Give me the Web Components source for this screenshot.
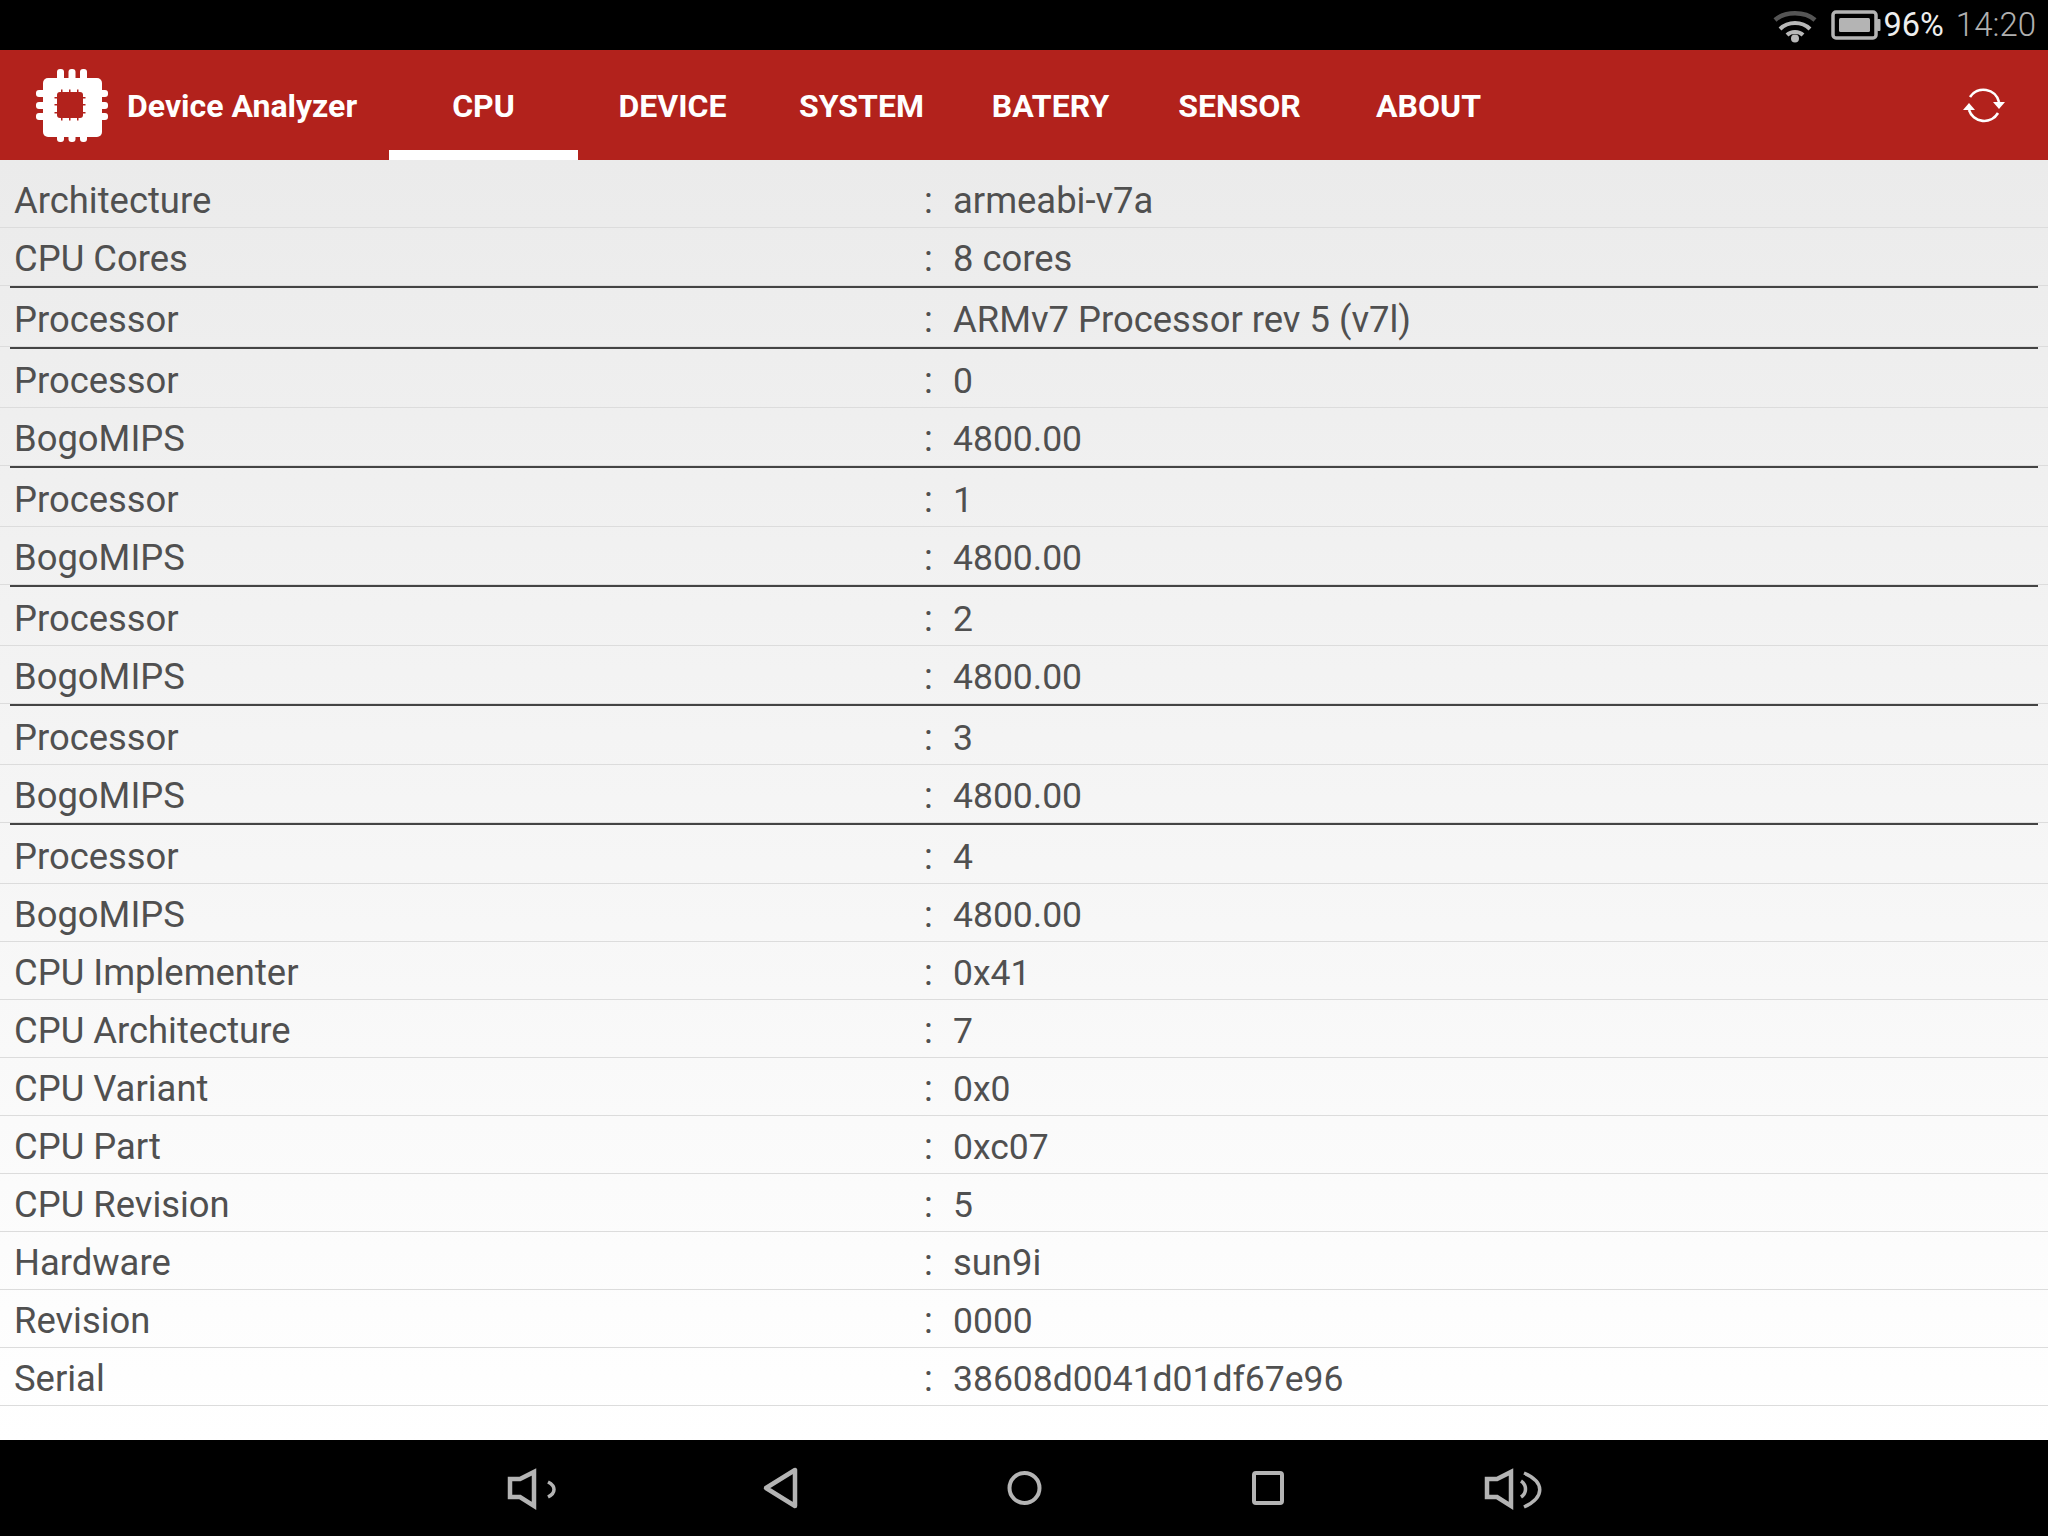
<!DOCTYPE html>
<html><head><meta charset="utf-8"><style>
html,body{margin:0;padding:0;background:#fff}
body{width:2048px;height:1536px;overflow:hidden;font-family:Roboto,"Liberation Sans",sans-serif}
</style></head><body>
<da-app>
<da-status></da-status>
<da-header></da-header>
<da-list>
<da-row k="Architecture" v="armeabi-v7a"></da-row>
<da-row k="CPU Cores" v="8 cores" end></da-row>
<da-row k="Processor" v="ARMv7 Processor rev 5 (v7l)" end></da-row>
<da-row k="Processor" v="0" n></da-row><da-row k="BogoMIPS" v="4800.00" end n></da-row>
<da-row k="Processor" v="1" n></da-row><da-row k="BogoMIPS" v="4800.00" end n></da-row>
<da-row k="Processor" v="2" n></da-row><da-row k="BogoMIPS" v="4800.00" end n></da-row>
<da-row k="Processor" v="3" n></da-row><da-row k="BogoMIPS" v="4800.00" end n></da-row>
<da-row k="Processor" v="4" n></da-row><da-row k="BogoMIPS" v="4800.00" n></da-row>
<da-row k="CPU Implementer" v="0x41" n></da-row>
<da-row k="CPU Architecture" v="7" n></da-row>
<da-row k="CPU Variant" v="0x0" n></da-row>
<da-row k="CPU Part" v="0xc07" n></da-row>
<da-row k="CPU Revision" v="5" n></da-row>
<da-row k="Hardware" v="sun9i"></da-row>
<da-row k="Revision" v="0000" n></da-row>
<da-row k="Serial" v="38608d0041d01df67e96" n></da-row>
</da-list>
<da-nav></da-nav>
</da-app>
<script>
function def(name,css,html){
  customElements.define(name,class extends HTMLElement{
    connectedCallback(){
      if(this.shadowRoot)return;
      const r=this.attachShadow({mode:'open'});
      r.innerHTML='<style>'+css+'</style>'+(typeof html==='function'?html(this):html);
    }
  });
}
def('da-app',`:host{display:flex;flex-direction:column;width:2048px;height:1536px}`,`<slot></slot>`);
def('da-status',`:host{display:flex;height:50px;flex:none;background:#000;align-items:center;justify-content:flex-end;padding-right:12px;box-sizing:border-box;font-family:Roboto,sans-serif;font-size:33px;font-weight:300;line-height:50px}
.p{color:#eee;margin-left:3px;font-weight:400;font-size:32.5px}.t{color:#b0b0b0;margin-left:12px}
svg{display:block;flex:none}`,
`<svg width="44" height="34" viewBox="0 0 44 34" style="margin:4px 14px 0 0"><path d="M2 10C12 1 32 1 42 10" fill="none" stroke="#555" stroke-width="4.5"/><path d="M7 19C15 11 29 11 37 19" fill="none" stroke="#b8b8b8" stroke-width="4"/><path d="M14 25C18 21 26 21 30 25" fill="none" stroke="#b8b8b8" stroke-width="4"/><circle cx="22" cy="28.5" r="4" fill="#b8b8b8"/></svg>
<svg width="50" height="30" viewBox="0 0 50 30"><rect x="2" y="2" width="43" height="26" rx="3" fill="none" stroke="#b4b4b4" stroke-width="3.5"/><rect x="8" y="8" width="31" height="14" rx="1.5" fill="#b4b4b4"/><rect x="46" y="9" width="3.5" height="12" rx="1" fill="#b4b4b4"/></svg>
<span class="p">96%</span><span class="t">14:20</span>`);
def('da-header',`:host{display:flex;height:110px;flex:none;background:#b2221c;color:#fff;box-sizing:border-box;align-items:stretch}
.logo{display:block;margin:19px 0 0 36px;width:72px;height:73px;flex:none}
.title{font-size:32px;font-weight:700;margin-left:19px;line-height:112px;width:262px;flex:none}
.tabs{display:flex;font-size:32px;font-weight:700}
.tab{display:block;width:189px;line-height:112px;text-align:center;box-sizing:border-box}
.on{box-shadow:inset 0 -10px 0 #fff}
.sync{display:block;align-self:center;margin-left:auto;margin-right:40px;flex:none}`,
`<svg class="logo" viewBox="0 0 72 73"><g fill="#fff"><rect x="7" y="9" width="59" height="59" rx="5"/><rect x="21" y="0" width="7" height="73" rx="3"/><rect x="32.500" y="0" width="7" height="73" rx="3"/><rect x="44" y="0" width="7" height="73" rx="3"/><rect x="0" y="21" width="72" height="7" rx="3"/><rect x="0" y="33" width="72" height="7" rx="3"/><rect x="0" y="44" width="72" height="7" rx="3"/></g><rect x="21" y="23" width="26" height="26" rx="3" fill="#b2221c"/><g fill="#b2221c"><rect x="25" y="20.500" width="1.500" height="31"/><rect x="33" y="20.500" width="1.500" height="31"/><rect x="41" y="20.500" width="1.500" height="31"/><rect x="18.500" y="28" width="31" height="1.500"/><rect x="18.500" y="35" width="31" height="1.500"/><rect x="18.500" y="43" width="31" height="1.500"/></g></svg>
<span class="title">Device Analyzer</span>
<div class="tabs"><span class="tab on">CPU</span><span class="tab">DEVICE</span><span class="tab">SYSTEM</span><span class="tab">BATERY</span><span class="tab">SENSOR</span><span class="tab">ABOUT</span></div>
<svg class="sync" width="48" height="40" viewBox="0 0 48 40" fill="none"><path d="M10 12A16 16 0 0 1 39 17" stroke="#fff" stroke-width="2.6"/><path d="M38 28A16 16 0 0 1 9 25" stroke="#fff" stroke-width="2.6"/><path d="M33 17H45L39 24Z" fill="#fff"/><path d="M3 25H15L9 18Z" fill="#fff"/></svg>`);
def('da-list',`:host{display:block;flex:1;min-height:0;background:linear-gradient(#ebebeb,#fff);overflow:hidden;padding-top:10px;box-sizing:border-box}`,`<slot></slot>`);
def('da-row',`:host{display:block;font-size:36.4px;font-weight:400;color:#505050;line-height:57px}
.i span{margin-top:-1px}
:host([n]) .v{font-size:35.5px;margin-top:0}
.i{display:grid;grid-template-columns:910px 29px 1fr;padding:3px 0 0 14px;height:54px;border-bottom:1px solid #dcdcdc}
.rule{display:none;margin:0 10px 1px;height:2px;background:#444}
:host([end]) .rule{display:block}`,
t=>`<div class="i"><span>${t.getAttribute('k')}</span><span>:</span><span class="v">${t.getAttribute('v')}</span></div><div class="rule"></div>`);
def('da-nav',`:host{display:block;height:96px;flex:none;background:#000}
svg{display:block}`,
`<svg width="2048" height="96" fill="none" stroke="#b4b4b4" stroke-width="4"><path d="M510 39H520L534 32V66L520 57H510Z" stroke-width="4.500"/><path d="M548 42C556 46 556 53 548 57" stroke-width="3.500"/><path d="M766 48L795 30V66Z" stroke-width="4.500" stroke-linejoin="round"/><circle cx="1024.500" cy="48" r="15"/><rect x="1254" y="33" width="28" height="30" rx="2"/><path d="M1487 39H1497L1511 32V66L1497 57H1487Z" stroke-width="4.500"/><path d="M1521 41C1527 45 1527 53 1521 57" stroke-width="3.500"/><path d="M1524 33C1545 42 1545 57 1524 67" stroke-width="3.500"/></svg>`);
</script>
</body></html>
